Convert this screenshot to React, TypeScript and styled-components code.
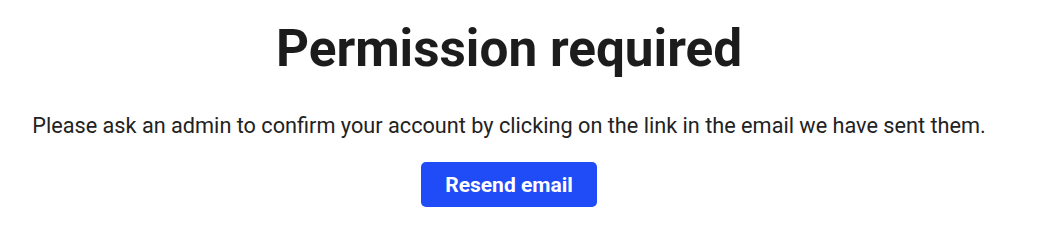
import React from 'react';
import styled, { createGlobalStyle } from 'styled-components';

const GlobalStyle = createGlobalStyle`
  html, body {
    margin: 0;
    padding: 0;
    background: #ffffff;
    font-family: Roboto, "Noto Sans", Arial, sans-serif;
  }
`;

const App: React.FC = () => {
  return (
    <>
      <GlobalStyle />
      <Page>
        <Title>Permission required</Title>
        <Message>
          Please ask an admin to confirm your account by clicking on the link in the email we have sent them.
        </Message>
        <ResendButton type="button">Resend email</ResendButton>
      </Page>
    </>
  );
};

export default App;

const Page = styled.div`
  display: flex;
  flex-direction: column;
  align-items: center;
  width: 1018px;
  padding-top: 19px;
`;

const Title = styled.h1`
  margin: 0;
  font-size: 51.3px;
  font-weight: 700;
  line-height: 60px;
  color: #1c1c1c;
`;

const Message = styled.p`
  margin: 34px 0 0;
  font-size: 21.7px;
  line-height: 26px;
  color: #222222;
  white-space: nowrap;
`;

const ResendButton = styled.button`
  margin-top: 23px;
  width: 176px;
  height: 45px;
  border: none;
  border-radius: 5px;
  background-color: #1f4cf6;
  color: #ffffff;
  font-family: Roboto, "Noto Sans", Arial, sans-serif;
  font-size: 21px;
  font-weight: 700;
  cursor: pointer;
`;
